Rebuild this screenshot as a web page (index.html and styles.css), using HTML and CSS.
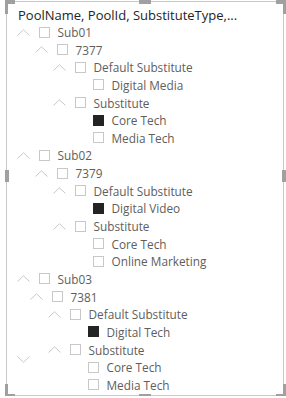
FILE: index.html
```html
<!DOCTYPE html>
<html lang="en">
<head>
  <meta charset="UTF-8">
  <title>Slicer</title>
  <link rel="stylesheet" href="styles.css">
</head>
<body>
  <div class="visual">
    <span class="handle tl"></span>
    <span class="handle tr"></span>
    <span class="handle bl"></span>
    <span class="handle br"></span>
    <span class="handle tm"></span>
    <span class="handle bm"></span>
    <span class="handle ml"></span>
    <span class="handle mr"></span>

    <div class="header">PoolName, PoolId, SubstituteType,...</div>

    <div class="tree">
      <div class="row lvl0"><svg class="chev" viewBox="0 0 13 7"><polyline points="0.5,6.5 6.5,0.8 12.5,6.5"/></svg><span class="box"></span><span class="label">Sub01</span></div>
      <div class="row lvl1"><svg class="chev" viewBox="0 0 13 7"><polyline points="0.5,6.5 6.5,0.8 12.5,6.5"/></svg><span class="box"></span><span class="label">7377</span></div>
      <div class="row lvl2"><svg class="chev" viewBox="0 0 13 7"><polyline points="0.5,6.5 6.5,0.8 12.5,6.5"/></svg><span class="box"></span><span class="label">Default Substitute</span></div>
      <div class="row lvl3"><span class="chev"></span><span class="box"></span><span class="label">Digital Media</span></div>
      <div class="row lvl2"><svg class="chev" viewBox="0 0 13 7"><polyline points="0.5,6.5 6.5,0.8 12.5,6.5"/></svg><span class="box"></span><span class="label">Substitute</span></div>
      <div class="row lvl3"><span class="chev"></span><span class="box on"></span><span class="label">Core Tech</span></div>
      <div class="row lvl3"><span class="chev"></span><span class="box"></span><span class="label">Media Tech</span></div>

      <div class="row lvl0"><svg class="chev" viewBox="0 0 13 7"><polyline points="0.5,6.5 6.5,0.8 12.5,6.5"/></svg><span class="box"></span><span class="label">Sub02</span></div>
      <div class="row lvl1"><svg class="chev" viewBox="0 0 13 7"><polyline points="0.5,6.5 6.5,0.8 12.5,6.5"/></svg><span class="box"></span><span class="label">7379</span></div>
      <div class="row lvl2"><svg class="chev" viewBox="0 0 13 7"><polyline points="0.5,6.5 6.5,0.8 12.5,6.5"/></svg><span class="box"></span><span class="label">Default Substitute</span></div>
      <div class="row lvl3"><span class="chev"></span><span class="box on"></span><span class="label">Digital Video</span></div>
      <div class="row lvl2"><svg class="chev" viewBox="0 0 13 7"><polyline points="0.5,6.5 6.5,0.8 12.5,6.5"/></svg><span class="box"></span><span class="label">Substitute</span></div>
      <div class="row lvl3"><span class="chev"></span><span class="box"></span><span class="label">Core Tech</span></div>
      <div class="row lvl3"><span class="chev"></span><span class="box"></span><span class="label">Online Marketing</span></div>

      <div class="row lvl0"><svg class="chev" viewBox="0 0 13 7"><polyline points="0.5,6.5 6.5,0.8 12.5,6.5"/></svg><span class="box"></span><span class="label">Sub03</span></div>
      <div class="row lvl1 shift"><svg class="chev" viewBox="0 0 13 7"><polyline points="0.5,6.5 6.5,0.8 12.5,6.5"/></svg><span class="box"></span><span class="label">7381</span></div>
      <div class="row lvl2 shift"><svg class="chev" viewBox="0 0 13 7"><polyline points="0.5,6.5 6.5,0.8 12.5,6.5"/></svg><span class="box"></span><span class="label">Default Substitute</span></div>
      <div class="row lvl3 shift"><span class="chev"></span><span class="box on"></span><span class="label">Digital Tech</span></div>
      <div class="row lvl2 shift"><svg class="chev" viewBox="0 0 13 7"><polyline points="0.5,6.5 6.5,0.8 12.5,6.5"/></svg><span class="box"></span><span class="label">Substitute</span></div>
      <div class="row lvl3 shift"><span class="chev"></span><span class="box"></span><span class="label">Core Tech</span></div>
      <div class="row lvl3 shift"><span class="chev"></span><span class="box"></span><span class="label">Media Tech</span></div>

      <svg class="chev down" viewBox="0 0 13 7"><polyline points="0.5,0.5 6.5,6.2 12.5,0.5"/></svg>
    </div>
  </div>
</body>
</html>
```

FILE: styles.css
```css
body {
  margin: 0;
  background: #ffffff;
  font-family: "Segoe UI", "Open Sans", sans-serif;
}
.visual {
  position: relative;
  box-sizing: border-box;
  margin: 1px 0 0 6px;
  width: 278px;
  height: 395px;
  border: 1px solid #c8c8c8;
}

/* selection handles */
.handle {
  position: absolute;
  box-sizing: border-box;
}
.handle.tl, .handle.tr, .handle.bl, .handle.br {
  width: 10px;
  height: 14px;
  border: 0 solid #a0a0a0;
}
.handle.tl { left: -2px; top: -2px; border-top-width: 4px; border-left-width: 3px; }
.handle.tr { right: -3px; top: -2px; border-top-width: 4px; border-right-width: 3px; }
.handle.bl { left: -2px; bottom: -3px; border-bottom-width: 4px; border-left-width: 3px; }
.handle.br { right: -3px; bottom: -3px; border-bottom-width: 4px; border-right-width: 3px; }
.handle.tm, .handle.bm {
  left: 132px;
  width: 12px;
  height: 4px;
  background: #a0a0a0;
}
.handle.tm { top: -2px; }
.handle.bm { bottom: -3px; }
.handle.ml, .handle.mr {
  top: 168px;
  width: 4px;
  height: 12px;
  background: #a0a0a0;
}
.handle.ml { left: -2px; }
.handle.mr { right: -3px; }

.header {
  padding: 4.5px 0 0 11px;
  height: 16.7px;
  font-size: 13px;
  line-height: 16px;
  color: #252423;
  white-space: nowrap;
}

.tree {
  position: relative;
}
.row {
  display: flex;
  align-items: center;
  height: 17.65px;
  font-size: 11.8px;
  color: #605e5c;
  white-space: nowrap;
}
.row.lvl0 { padding-left: 10px; }
.row.lvl1 { padding-left: 28px; }
.row.lvl2 { padding-left: 46px; }
.row.lvl3 { padding-left: 64px; }
.row.shift { margin-left: -5px; }

.chev {
  flex: none;
  width: 13px;
  height: 7px;
  margin-right: 9px;
}
.chev polyline {
  fill: none;
  stroke: #c8c8c8;
  stroke-width: 1;
}
.chev.down {
  position: absolute;
  left: 10px;
  top: 333px;
}

.box {
  flex: none;
  box-sizing: border-box;
  width: 11px;
  height: 11px;
  border: 1px solid #c8c8c8;
  margin-right: 7.5px;
}
.box.on {
  background: #252423;
  border-color: #252423;
}
.label {
  line-height: 16px;
}
```
